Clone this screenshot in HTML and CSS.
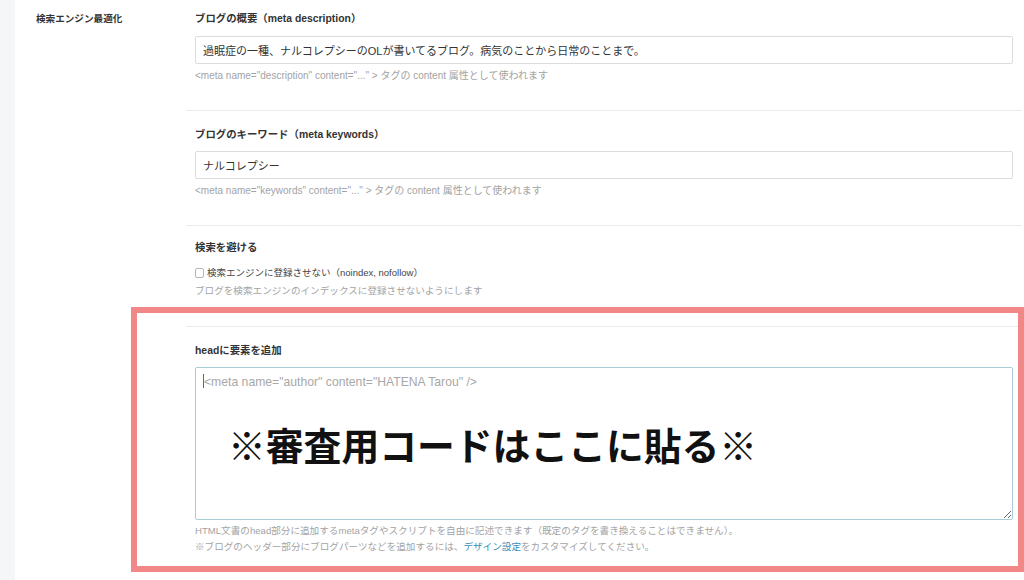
FILE: index.html
```html
<!DOCTYPE html>
<html lang="ja">
<head>
<meta charset="utf-8">
<title>検索エンジン最適化</title>
<link rel="stylesheet" href="styles.css">
</head>
<body>
<div class="page">
  <div class="gutter"></div>
  <div class="settings">
    <div class="side">
      <h2 class="side-title">検索エンジン最適化</h2>
    </div>
    <div class="fields">
      <section class="field field-first">
        <h3 class="field-label">ブログの概要（meta description）</h3>
        <input class="text-input" type="text" value="過眠症の一種、ナルコレプシーのOLが書いてるブログ。病気のことから日常のことまで。">
        <p class="help help-meta">&lt;meta name="description" content="..." &gt; タグの content 属性として使われます</p>
      </section>
      <section class="field">
        <h3 class="field-label">ブログのキーワード（meta keywords）</h3>
        <input class="text-input" type="text" value="ナルコレプシー">
        <p class="help help-meta">&lt;meta name="keywords" content="..." &gt; タグの content 属性として使われます</p>
      </section>
      <section class="field field-check">
        <h3 class="field-label">検索を避ける</h3>
        <label class="check-row"><span class="checkbox"></span>検索エンジンに登録させない（noindex, nofollow）</label>
        <p class="help help-tight">ブログを検索エンジンのインデックスに登録させないようにします</p>
      </section>
      <section class="field field-head">
        <h3 class="field-label">headに要素を追加</h3>
        <div class="area-wrap">
          <textarea class="text-area" placeholder="<meta name=&quot;author&quot; content=&quot;HATENA Tarou&quot; />"></textarea>
          <span class="caret"></span>
        </div>
        <p class="help help-multi">HTML文書のhead部分に追加するmetaタグやスクリプトを自由に記述できます（既定のタグを書き換えることはできません）。<br>※ブログのヘッダー部分にブログパーツなどを追加するには、<a class="link" href="#">デザイン設定</a>をカスタマイズしてください。</p>
      </section>
    </div>
  </div>
  <div class="annot-box"></div>
  <p class="annot-text">※審査用コードはここに貼る※</p>
</div>
</body>
</html>
```
FILE: styles.css
```css
* { box-sizing: border-box; }
html, body {
  margin: 0;
  padding: 0;
  background: #fff;
}
body {
  font-family: "Liberation Sans", "Noto Sans CJK JP", sans-serif;
  color: #333;
}
.page {
  position: relative;
  display: flex;
  width: 1024px;
  height: 580px;
  overflow: hidden;
}
.gutter {
  width: 15px;
  flex: none;
  background: #f5f6f8;
}
.settings {
  flex: 1;
  display: flex;
  padding-right: 2px;
}
.side {
  width: 171px;
  flex: none;
  padding: 11px 0 0 21px;
}
.side-title {
  margin: 0;
  font-size: 9.6px;
  line-height: 16px;
  font-weight: bold;
  color: #333;
}
.fields {
  flex: 1;
  min-width: 0;
}
.field {
  padding: 16px 9px 27px;
  border-top: 1px solid #ebebeb;
}
.field-first {
  border-top: none;
  padding-top: 11px;
}
.field-label {
  margin: 0 0 8px;
  font-size: 10.4px;
  line-height: 16px;
  font-weight: bold;
  color: #333;
}
.field-first .field-label { margin-bottom: 9px; }
.text-input {
  display: block;
  width: 100%;
  height: 28px;
  margin: 0;
  padding: 0 7px;
  border: 1px solid #dcdcdc;
  border-radius: 2px;
  font-family: "Liberation Sans", "Noto Sans CJK JP", sans-serif;
  font-size: 11px;
  color: #333;
  background: #fff;
  outline: none;
}
.help {
  margin: 5px 0 0;
  font-size: 9.6px;
  line-height: 14px;
  color: #a3a3a3;
}
.help-meta { font-size: 10px; }
.field-check {
  padding-top: 14px;
  padding-bottom: 28px;
}
.field-check .field-label { margin-bottom: 9px; }
.check-row {
  display: flex;
  align-items: center;
  gap: 3px;
  font-size: 9.5px;
  line-height: 16px;
  color: #444;
}
.checkbox {
  width: 9px;
  height: 10px;
  border: 1px solid #b5b5b5;
  border-radius: 2px;
  background: #fff;
}
.help-tight { margin-top: 3px; }
.field-head { padding-bottom: 20px; }
.area-wrap {
  position: relative;
}
.text-area {
  display: block;
  width: 100%;
  height: 153px;
  margin: 0;
  padding: 7px 8px;
  border: 1px solid #a9cdd6;
  border-radius: 2px;
  font-family: "Liberation Sans", "Noto Sans CJK JP", sans-serif;
  font-size: 12.2px;
  line-height: 14px;
  color: #333;
  background: #fff;
  outline: none;
  resize: both;
}
.text-area::placeholder { color: #a8a8a8; }
.caret {
  position: absolute;
  left: 8px;
  top: 7px;
  width: 1px;
  height: 14px;
  background: #666;
}
.help-multi {
  margin-top: 3px;
  line-height: 16px;
}
.link {
  color: #3a8db5;
  text-decoration: none;
}
.annot-box {
  position: absolute;
  left: 131px;
  top: 307px;
  width: 893px;
  height: 265px;
  border: 6px solid #f28787;
  pointer-events: none;
}
.annot-text {
  position: absolute;
  left: 228px;
  top: 424px;
  margin: 0;
  font-family: "Noto Sans CJK JP", sans-serif;
  font-size: 37.8px;
  line-height: 40px;
  font-weight: bold;
  color: #111;
  white-space: nowrap;
}
```
